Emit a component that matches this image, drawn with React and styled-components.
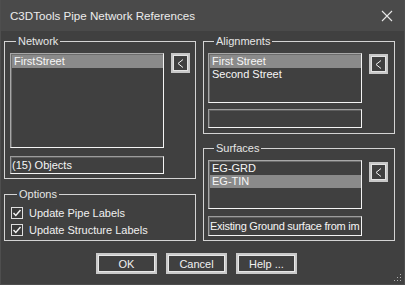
import React from 'react'
import styled, { createGlobalStyle } from 'styled-components'

const Global = createGlobalStyle`
  html, body {
    margin: 0;
    padding: 0;
    background: #404040;
  }
  * {
    box-sizing: border-box;
  }
`

const Window = styled.div`
  position: relative;
  width: 405px;
  height: 285px;
  display: flex;
  flex-direction: column;
  background: #404040;
  border-left: 1px solid #4e4e4e;
  border-right: 1px solid #4e4e4e;
  border-bottom: 1px solid #4e4e4e;
  font-family: "Liberation Sans", Arial, sans-serif;
  font-size: 11px;
  color: #f2f2f2;
`

const TitleBar = styled.div`
  height: 31px;
  flex: none;
  display: flex;
  align-items: center;
  justify-content: space-between;
  padding: 0 9px 0 9px;
  background: #4a4a4a;
`

const Title = styled.div`
  font-size: 11.6px;
  color: #ececec;
`

const CloseIcon = styled.svg`
  width: 12px;
  height: 12px;
  margin-right: 2px;
`

const Body = styled.div`
  flex: 1;
  display: flex;
  flex-direction: column;
  padding: 4px 9px 0 3px;
`

const Columns = styled.div`
  display: grid;
  grid-template-columns: 192px 192px;
  column-gap: 7px;
`

const Column = styled.div`
  display: flex;
  flex-direction: column;
  gap: ${p => p.gap}px;
`

const Group = styled.fieldset`
  margin: 0;
  min-width: 0;
  height: ${p => p.h}px;
  border: 1px solid #d4d4d4;
  padding: ${p => p.top}px 5px 0 ${p => p.left}px;
  display: flex;
  flex-direction: column;
  gap: ${p => p.rowGap || 0}px;
`

const Legend = styled.legend`
  margin-left: 6px;
  padding: 0 2px;
  line-height: 13px;
  font-size: 11px;
  color: #e6e6e6;
`

const PickerRow = styled.div`
  display: flex;
  align-items: flex-start;
  gap: 7px;
`

const ListBox = styled.div`
  width: ${p => p.w}px;
  height: ${p => p.h}px;
  border: 1px solid;
  border-color: #a8a8a8 #f4f4f4 #f4f4f4 #a8a8a8;
  box-shadow: inset 1px 1px 0 #6c6c6c;
  padding: 1px 0 0 1px;
  background: #404040;
  overflow: hidden;
`

const Item = styled.div`
  height: 13px;
  line-height: 13px;
  padding-left: 2px;
  white-space: nowrap;
  background: ${p => (p.selected ? '#8a8a8a' : 'transparent')};
  color: #f6f6f6;
`

const PickButton = styled.button`
  width: 19px;
  height: 20px;
  margin-top: ${p => p.offset}px;
  padding: 0;
  border: 2px solid #c8c8c8;
  box-shadow: inset 0 0 0 1px #e4e4e4;
  background: #404040;
  display: flex;
  align-items: center;
  justify-content: center;
`

const TextField = styled.div`
  width: 154px;
  height: ${p => p.h}px;
  margin-top: ${p => p.gap}px;
  border: 1px solid;
  border-color: #9c9c9c #f4f4f4 #f4f4f4 #9c9c9c;
  box-shadow: inset 1px 1px 0 #5e5e5e;
  padding: 0 1px;
  line-height: ${p => p.h - 2}px;
  letter-spacing: ${p => (p.tight ? '-0.25px' : 'normal')};
  white-space: nowrap;
  overflow: hidden;
  color: #f6f6f6;
`

const CheckRow = styled.label`
  display: flex;
  align-items: center;
  gap: 6px;
  height: 12px;
  color: #f0f0f0;
  font-size: 11px;
`

const ButtonRow = styled.div`
  display: flex;
  justify-content: center;
  gap: 9px;
  padding: 12px 6px 0 0;
`

const PushButton = styled.button`
  width: 61px;
  height: 21px;
  padding: 0;
  border: 2px solid #cacaca;
  box-shadow: inset 0 0 0 1px #e8e8e8;
  background: #404040;
  color: #f0f0f0;
  font-family: "Liberation Sans", Arial, sans-serif;
  font-size: 11px;
`

const Grip = styled.svg`
  position: absolute;
  right: 2px;
  bottom: 2px;
  width: 8px;
  height: 8px;
`

const Chevron = () => (
  <svg width="7" height="9" viewBox="0 0 7 9">
    <polyline points="6,0.5 1,4.5 6,8.5" fill="none" stroke="#f0f0f0" strokeWidth="1" />
  </svg>
)

const Check = () => (
  <svg width="12" height="12" viewBox="0 0 12 12">
    <rect x="0.5" y="0.5" width="11" height="11" fill="#3a3a3a" stroke="#dedede" />
    <polyline points="2.5,6 4.8,8.5 9.5,3" fill="none" stroke="#f4f4f4" strokeWidth="1.4" />
  </svg>
)

const Picker = ({ items, selected, listH, offset }) => (
  <PickerRow>
    <ListBox w={154} h={listH}>
      {items.map((it, i) => (
        <Item key={it} selected={i === selected}>{it}</Item>
      ))}
    </ListBox>
    <PickButton offset={offset}><Chevron /></PickButton>
  </PickerRow>
)

export default function App() {
  return (
    <>
      <Global />
      <Window>
        <TitleBar>
          <Title>C3DTools Pipe Network References</Title>
          <CloseIcon viewBox="0 0 12 12">
            <path d="M1 1 L11 11 M11 1 L1 11" stroke="#e8e8e8" strokeWidth="1.1" />
          </CloseIcon>
        </TitleBar>
        <Body>
          <Columns>
            <Column gap={9}>
              <Group h={144} top={5} left={5}>
                <Legend>Network</Legend>
                <Picker items={['FirstStreet']} selected={0} listH={95} offset={0} />
                <TextField h={18} gap={8}>(15) Objects</TextField>
              </Group>
              <Group h={53} top={6} left={6} rowGap={5}>
                <Legend>Options</Legend>
                <CheckRow><Check />Update Pipe Labels</CheckRow>
                <CheckRow><Check />Update Structure Labels</CheckRow>
              </Group>
            </Column>
            <Column gap={8}>
              <Group h={99} top={5} left={4}>
                <Legend>Alignments</Legend>
                <Picker items={['First Street', 'Second Street']} selected={0} listH={50} offset={1} />
                <TextField h={19} gap={6} />
              </Group>
              <Group h={99} top={5} left={4}>
                <Legend>Surfaces</Legend>
                <Picker items={['EG-GRD', 'EG-TIN']} selected={1} listH={49} offset={2} />
                <TextField h={20} gap={7} tight>Existing Ground surface from im</TextField>
              </Group>
            </Column>
          </Columns>
          <ButtonRow>
            <PushButton>OK</PushButton>
            <PushButton>Cancel</PushButton>
            <PushButton>Help ...</PushButton>
          </ButtonRow>
        </Body>
        <Grip viewBox="0 0 8 8">
          <rect x="6" y="0" width="1" height="1" fill="#b0b0b0" />
          <rect x="6" y="3" width="1" height="1" fill="#b0b0b0" />
          <rect x="3" y="3" width="1" height="1" fill="#b0b0b0" />
          <rect x="6" y="6" width="1" height="1" fill="#b0b0b0" />
          <rect x="3" y="6" width="1" height="1" fill="#b0b0b0" />
          <rect x="0" y="6" width="1" height="1" fill="#b0b0b0" />
        </Grip>
      </Window>
    </>
  )
}
